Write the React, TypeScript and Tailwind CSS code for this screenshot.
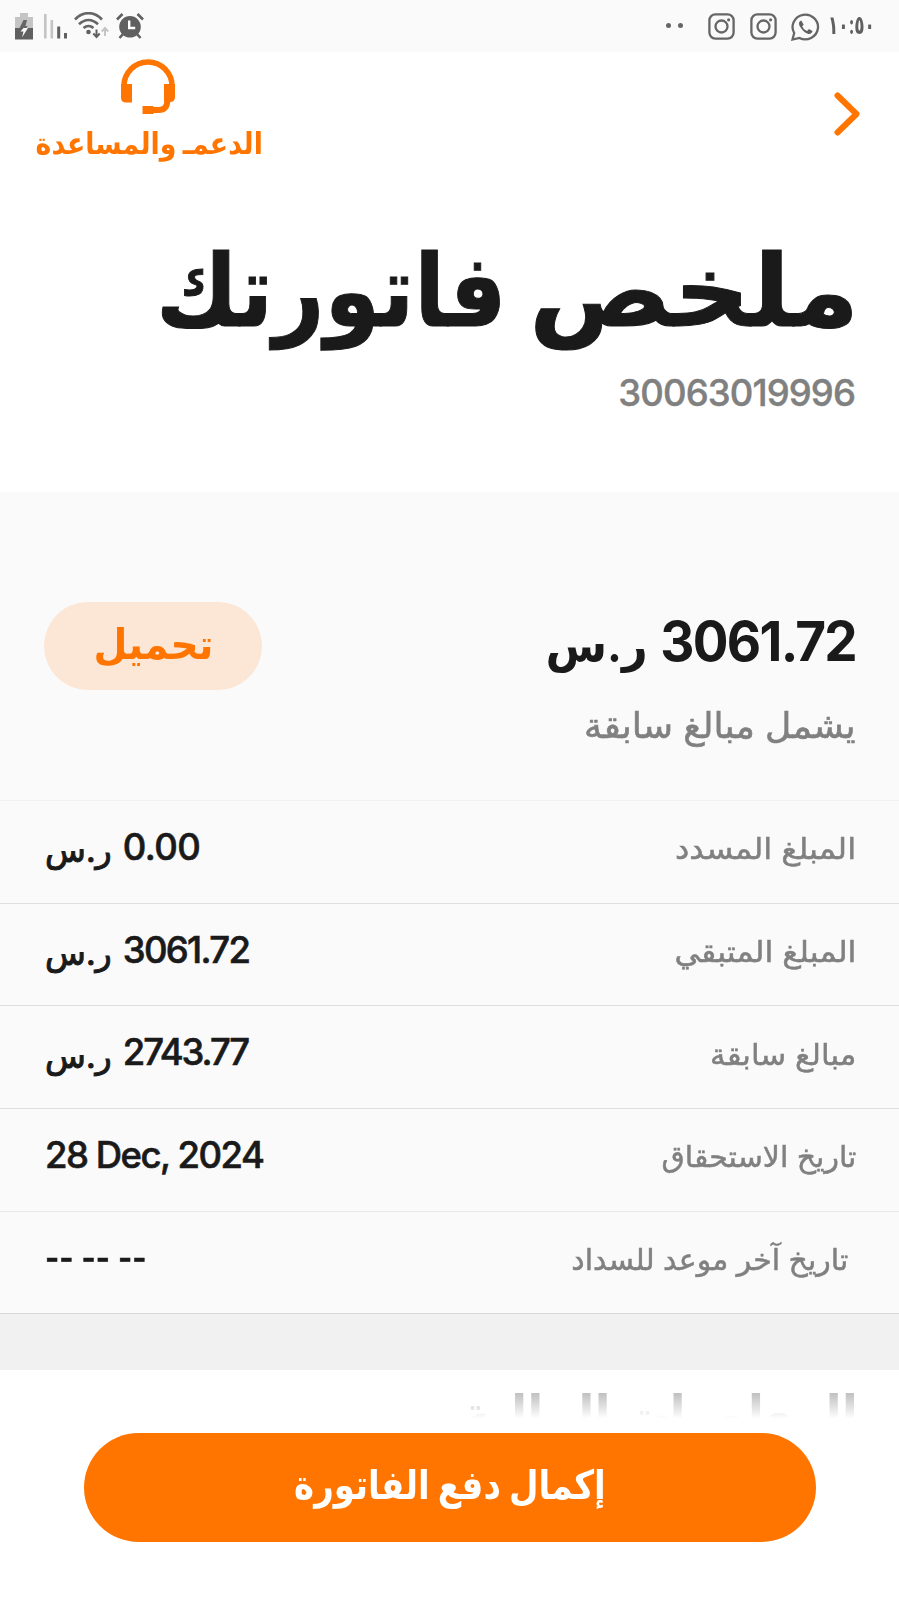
import React from 'react';

const rows = [
  { label: 'المبلغ المسدد', value: '0.00', currency: true, labelClass: 'scale-x-[1.09]', valueClass: 'tracking-[-0.6px]', border: 'border-[#f1f1f1]' },
  { label: 'المبلغ المتبقي', value: '3061.72', currency: true, labelClass: 'scale-x-[1.08]', valueClass: 'tracking-[-1.7px]', border: 'border-[#dfdfdf]' },
  { label: 'مبالغ سابقة', value: '2743.77', currency: true, labelClass: 'scale-x-[1.05]', valueClass: 'tracking-[-2.1px]', border: 'border-[#dfdfdf]' },
  { label: 'تاريخ الاستحقاق', value: '28 Dec, 2024', currency: false, labelClass: 'scale-x-[1.018]', valueClass: 'tracking-[-1.5px]', border: 'border-[#dfdfdf]' },
  { label: 'تاريخ آخر موعد للسداد', value: '-- -- --', currency: false, labelClass: 'scale-x-[1.017] ms-2', valueClass: 'scale-x-[0.84]', border: 'border-[#e8e8e8]' },
];

const InstagramIcon = () => (
  <svg width="27" height="27" viewBox="0 0 27 27" fill="none" stroke="#666" strokeWidth="2.3">
    <rect x="1.4" y="1.4" width="24.2" height="24.2" rx="6" />
    <circle cx="13.5" cy="13.5" r="6" />
    <circle cx="20.6" cy="6.8" r="1.6" fill="#666" stroke="none" />
  </svg>
);

const StatusBar = () => (
  <div dir="ltr" className="flex h-[52px] items-start bg-[#fafafa] pl-[15px] pr-[25px] pt-3">
    {/* Battery */}
    <svg width="18" height="28" viewBox="0 0 18 28" className="mr-[11px]">
      <path d="M5 1h8v4h5v11H0V5h5z" fill="#c4c4c4" />
      <path d="M0 16h18v11.5H0z" fill="#606060" />
      <path d="M8.5 8H12l-1.5 6h2l-1 2h-7z" fill="#666" />
      <path d="M8.5 16H13L7 25.5l1.5-6h-3z" fill="#fafafa" />
    </svg>
    {/* Signal */}
    <svg width="23" height="28" viewBox="0 0 23 28" className="mr-[7px]">
      <path d="M0 2h2.6v24.5H0zM6.5 8h2.6v18.5H6.5z" fill="#c4c4c4" />
      <path d="M13.2 14.5h3v12h-3zM20 21h3v5.5h-3z" fill="#606060" />
    </svg>
    {/* Wifi */}
    <svg width="36" height="28" viewBox="0 0 36 28" fill="none" className="mr-[6px]">
      <path d="M1 7.5C9-1 20-1 28 7.5M5 12.3c6-5.6 13-5.600 19 0M9.500 16c3-2.600 7-2.600 10 0" stroke="#666" strokeWidth="2.6" />
      <circle cx="14.5" cy="20" r="2.3" fill="#606060" />
      <path d="M22.5 17.5v7M19.3 21.5l3.2 3.6 3.2-3.6" stroke="#606060" strokeWidth="2" />
      <path d="M31 24v-7M27.8 19.500l3.200-3.600 3.200 3.600" stroke="#c4c4c4" strokeWidth="2" />
    </svg>
    {/* Alarm */}
    <svg width="28" height="28" viewBox="0 0 28 28" fill="none">
      <circle cx="14" cy="14.800" r="10.800" fill="#606060" />
      <path d="M1 7.500L6.500 2M27 7.500L21.500 2M7 22l-3.500 4M21 22l3.500 4" stroke="#606060" strokeWidth="2.600" />
      <path d="M13.200 8.500v7.500h6" stroke="#fff" strokeWidth="2.400" />
    </svg>
    <div className="flex-1" />
    <div className="mr-[25px] mt-[11px] flex gap-[7px]">
      <span className="size-[5px] rounded-full bg-[#666]" />
      <span className="size-[5px] rounded-full bg-[#666]" />
    </div>
    <div className="mr-[8px] mt-[1px] flex gap-[14.5px]">
      <InstagramIcon />
      <InstagramIcon />
      <svg width="29" height="29" viewBox="0 0 29 29" fill="none">
        <path d="M1.500 26.500l1.700-6.500A12.700 12.400 0 1 1 8.500 25z" stroke="#666" strokeWidth="2.300" />
        <path d="M10.300 7.500c-2.800 1-2.800 3.800-1 6.500 2 3.300 4.400 5.600 7.500 6.800 2 .6 4.300-.2 4.700-2.800l-3.600-2-1.700 2c-2.200-.8-4.200-2.700-5-4.800l1.500-1.500z" fill="#606060" />
      </svg>
    </div>
    <span className="w-[46px] whitespace-nowrap text-[26px] font-bold leading-[26px] text-[#606060]">
      <bdo dir="ltr" className="inline-block origin-left scale-x-[0.65]">١٠:٥٠</bdo>
    </span>
  </div>
);

const Header = () => (
  <header className="h-[440px] bg-white pl-9 pr-11">
    <div dir="ltr" className="flex h-[132px] justify-between">
      <div className="flex w-[227px] flex-col items-center pt-[7px] text-[#ff7500]">
        <svg width="56" height="56" viewBox="0 0 56 56" fill="none" className="-ml-[3px]">
          <path d="M4 28V27a24 24 0 0 1 48 0v1" stroke="#ff7500" strokeWidth="5.5" />
          <path d="M1 25h11v18.5H6q-5 0-5-5zM44 25h11v13q0 5-5 5h-6z" fill="#ff7500" />
          <path d="M47.5 40c0 8-3 11-9 11H33" stroke="#ff7500" strokeWidth="6" />
          <path d="M22.5 47h11v8h-11z" fill="#ff7500" />
        </svg>
        <span dir="rtl" className="mt-[7px] inline-block scale-x-[0.893] whitespace-nowrap text-[30px] font-bold leading-[43px]">الدعمـ والمساعدة</span>
      </div>
      <svg width="27" height="44" viewBox="0 0 27 44" fill="none" className="-mr-[6px] mt-[40px]">
        <path d="M3.5 3.5L22.5 22l-19 18.5" stroke="#ff7500" strokeWidth="6" strokeLinecap="round" strokeLinejoin="round" />
      </svg>
    </div>
    <h1 className="-mr-1 mt-[36px] h-[140px] whitespace-nowrap text-[100px] font-bold leading-[140px] [-webkit-text-stroke:1px_#1a1a1a]">
      <span className="inline-block origin-right scale-x-[1.061]">ملخص</span>{' '}
      <span className="ms-[18px] inline-block origin-right scale-x-[0.895]">فاتورتك</span>
    </h1>
    <p className="mt-[9px] text-[36.5px] font-medium leading-[48px] tracking-[-0.9px] text-[#808080] [-webkit-text-stroke:0.4px_#808080]">30063019996</p>
  </header>
);

export default function App() {
  return (
    <div dir="rtl" className="flex h-[1599px] w-[899px] flex-col overflow-hidden bg-white font-['Inter','DejaVu_Sans',sans-serif] text-[#1a1a1a]">
      <StatusBar />
      <Header />

      <section className="bg-[#fafafa]">
        <div className="flex h-[308px] justify-between pl-[44px] pr-[43px] pt-[110px]">
          <div>
            <div className="flex h-[80px] items-center gap-[5px] whitespace-nowrap">
              <span className="inline-block origin-right scale-x-[0.964] pb-[2px] text-[55px] font-bold tracking-[-1.8px]">3061.72</span>
              <span className="inline-block origin-right scale-x-[0.95] pt-[7px] text-[47px] font-bold">ر.س</span>
            </div>
            <p className="mt-[18px] origin-right scale-x-[1.033] whitespace-nowrap text-[35px] leading-[50px] text-[#808080] [-webkit-text-stroke:0.6px_#808080]">يشمل مبالغ سابقة</p>
          </div>
          <button className="flex h-[88px] w-[218px] items-center justify-center rounded-full bg-[#fce6d6] pb-[6px] text-[42px] font-bold text-[#ff7500]">
            <span className="inline-block scale-x-[0.93]">تحميل</span>
          </button>
        </div>

        {rows.map((row) => (
          <div key={row.label} className={`flex h-[102.7px] items-center justify-between border-t pb-[7px] pl-[45px] pr-[43px] ${row.border}`}>
            <span className={`inline-block origin-right whitespace-nowrap text-[29.5px] text-[#808080] [-webkit-text-stroke:0.5px_#808080] ${row.labelClass}`}>{row.label}</span>
            <div className="flex items-center whitespace-nowrap">
              <span dir="ltr" className={`inline-block w-0 origin-left pb-[2px] text-[36.5px] font-medium [-webkit-text-stroke:0.6px_#1a1a1a] ${row.valueClass}`}>{row.value}</span>
              {row.currency && (
                <span className="ms-[11px] pt-[4px] text-[33.5px] [-webkit-text-stroke:1px_#1a1a1a]">ر.س</span>
              )}
            </div>
          </div>
        ))}
      </section>

      <div className="h-[57px] shrink-0 border-t border-[#d8d8d8] bg-[#f1f1f1]" />

      <section className="h-[50px] shrink-0 pr-[41px] pt-[10px]">
        <h2 className="origin-right scale-x-[0.91] whitespace-nowrap bg-linear-to-b from-[#bdbdbd] from-17% to-white to-55% bg-clip-text text-[52px] font-bold leading-[70px] text-transparent">المعلومات المالية</h2>
      </section>

      <div className="flex justify-center pt-[13px]">
        <button className="relative flex h-[109px] w-[732px] items-center justify-center rounded-full bg-[#ff7500] pb-[6px] text-[40px] font-bold text-white">
          <span className="inline-block scale-x-[0.852]">إكمال دفع الفاتورة</span>
        </button>
      </div>
    </div>
  );
}
